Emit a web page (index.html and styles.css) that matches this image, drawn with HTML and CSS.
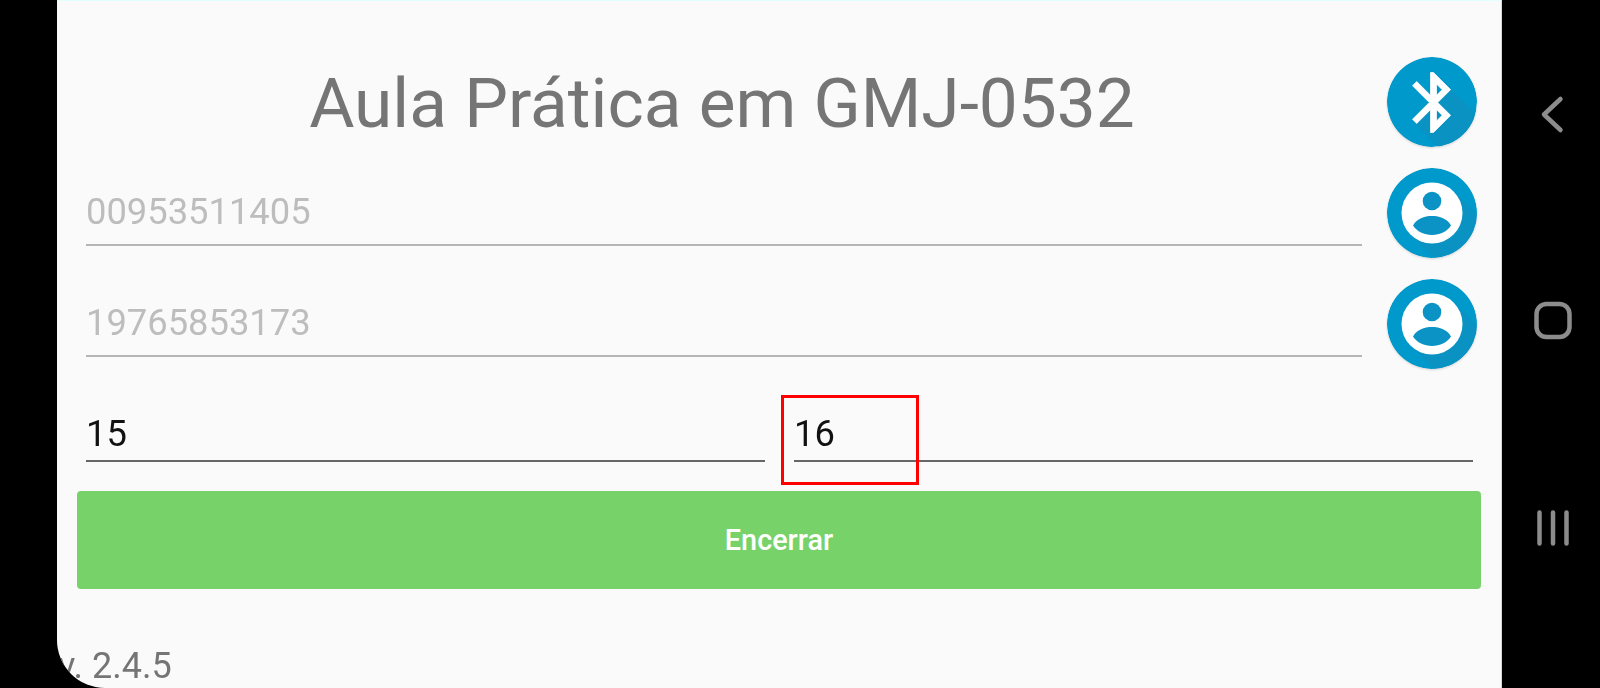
FILE: index.html
```html
<!DOCTYPE html>
<html lang="pt">
<head>
<meta charset="utf-8">
<title>Aula Prática</title>
<link rel="stylesheet" href="styles.css">
</head>
<body>
<div class="screen">
  <main class="app">
    <div class="row title-row">
      <h1 class="title">Aula Prática em GMJ-0532</h1>
      <svg class="fab" viewBox="0 0 90 90" aria-hidden="true">
        <circle cx="45" cy="45" r="45" fill="#0099cc"/>
        <path class="fab-shade" d="M63 31L120 88L85 124L28 66Z"/>
        <path class="bt-glyph" transform="translate(10.500 9.500) scale(3)" d="M17.71 7.71L12 2h-1v7.59L6.41 5 5 6.41 10.59 12 5 17.59 6.41 19 11 14.41V22h1l5.71-5.71-4.3-4.29 4.3-4.29zM13 5.83l1.88 1.88L13 9.59V5.83zm1.88 10.46L13 18.17v-3.76l1.88 1.88z"/>
      </svg>
    </div>
    <div class="row">
      <div class="field field-off">00953511405</div>
      <svg class="fab" viewBox="0 0 90 90" aria-hidden="true">
        <circle cx="45" cy="45" r="45" fill="#0099cc"/>
        <path class="fab-shade" d="M66.6 23.4L130 87L87 130L23.4 66.6Z"/>
        <circle cx="45" cy="45" r="30.5" fill="#fff"/>
        <circle cx="45" cy="33" r="9.3" fill="#0a93c4"/>
        <path fill="#0a93c4" d="M26 57.5C30 50.5 37 48 45 48S60 50.500 64 57.500C60 63.500 53 67 45 67S30 63.500 26 57.500Z"/>
      </svg>
    </div>
    <div class="row">
      <div class="field field-off">19765853173</div>
      <svg class="fab" viewBox="0 0 90 90" aria-hidden="true">
        <circle cx="45" cy="45" r="45" fill="#0099cc"/>
        <path class="fab-shade" d="M66.6 23.4L130 87L87 130L23.4 66.6Z"/>
        <circle cx="45" cy="45" r="30.5" fill="#fff"/>
        <circle cx="45" cy="33" r="9.3" fill="#0a93c4"/>
        <path fill="#0a93c4" d="M26 57.5C30 50.5 37 48 45 48S60 50.500 64 57.500C60 63.500 53 67 45 67S30 63.500 26 57.500Z"/>
      </svg>
    </div>
    <div class="pair">
      <div class="field field-on">15</div>
      <div class="field field-on">16</div>
    </div>
    <button class="action" type="button">Encerrar</button>
    <p class="version">v. 2.4.5</p>
    <div class="highlight"></div>
  </main>
  <nav class="nav">
    <svg class="nav-icon" viewBox="0 0 40 40" aria-hidden="true"><path d="M27.500 5L11 20.500L27.500 36"/></svg>
    <svg class="nav-icon" viewBox="0 0 40 40" aria-hidden="true"><rect x="3.500" y="3" width="33" height="33" rx="10"/></svg>
    <svg class="nav-icon" viewBox="0 0 40 40" aria-hidden="true"><path d="M6.500 4.500V35.500M20 4.500V35.500M33.500 4.500V35.500"/></svg>
  </nav>
</div>
</body>
</html>
```
FILE: styles.css
```css
* { box-sizing: border-box; }
html, body { margin: 0; height: 100%; background: #000; overflow: hidden; }
body { font-family: Roboto, "Liberation Sans", sans-serif; }
.screen { display: flex; width: 1600px; height: 688px; padding-left: 57px; background: #000; }
.app {
  position: relative;
  width: 1445px;
  height: 688px;
  padding-top: 56px;
  background: #fafafa;
  border-top: 1px solid #e0ffff;
  border-right: 1px solid #d8d8d8;
  border-bottom-left-radius: 48px;
  overflow: hidden;
  display: flex;
  flex-direction: column;
}
.row { display: flex; align-items: flex-start; gap: 25px; padding: 0 24px 0 29px; margin-bottom: 21px; }
.title-row { align-items: center; }
.title {
  flex: 1;
  margin: 0;
  padding: 4px 4px 0 0;
  font-size: 69.4px;
  font-weight: 400;
  line-height: 86px;
  text-align: center;
  color: #757575;
  will-change: transform;
}
.fab { flex: none; width: 90px; height: 90px; border-radius: 50%; overflow: hidden; filter: drop-shadow(0 1px 1px rgba(0,0,0,.15)); }
.fab-shade { fill: #0a92c2; }
.bt-glyph { fill: #fff; stroke: #fff; stroke-width: .25; }
.field { flex: 1; font-size: 36.35px; line-height: 42px; height: 78px; padding-top: 23px; border-bottom: 2px solid #b5b5b5; will-change: transform; }
.field-off { color: #bdbdbd; }
.pair { display: flex; gap: 29px; padding: 0 28px 0 29px; margin-top: 0; }
.pair .field { height: 72px; padding-top: 23px; color: #111; border-bottom-color: #666; }
.action {
  display: block;
  margin: 29px 20px 0;
  height: 98px;
  width: 1404px;
  border: 0;
  border-radius: 4px;
  background: #77d26a;
  color: #fff;
  font: 500 28.8px Roboto, "Liberation Sans", sans-serif;
}
.version { margin: 0; padding: 56px 0 0 1px; font-size: 36px; line-height: 42px; color: #757575; will-change: transform; }
.highlight { position: absolute; left: 724px; top: 394px; width: 138px; height: 90px; border: 3px solid #f00; }
.nav { flex: 1; display: grid; grid-auto-rows: 207px; justify-items: center; padding: 94px 0 0 3px; }
.nav-icon { width: 40px; height: 40px; fill: none; stroke: #8c8c8c; stroke-width: 4.500; stroke-linecap: round; stroke-linejoin: round; }
```
